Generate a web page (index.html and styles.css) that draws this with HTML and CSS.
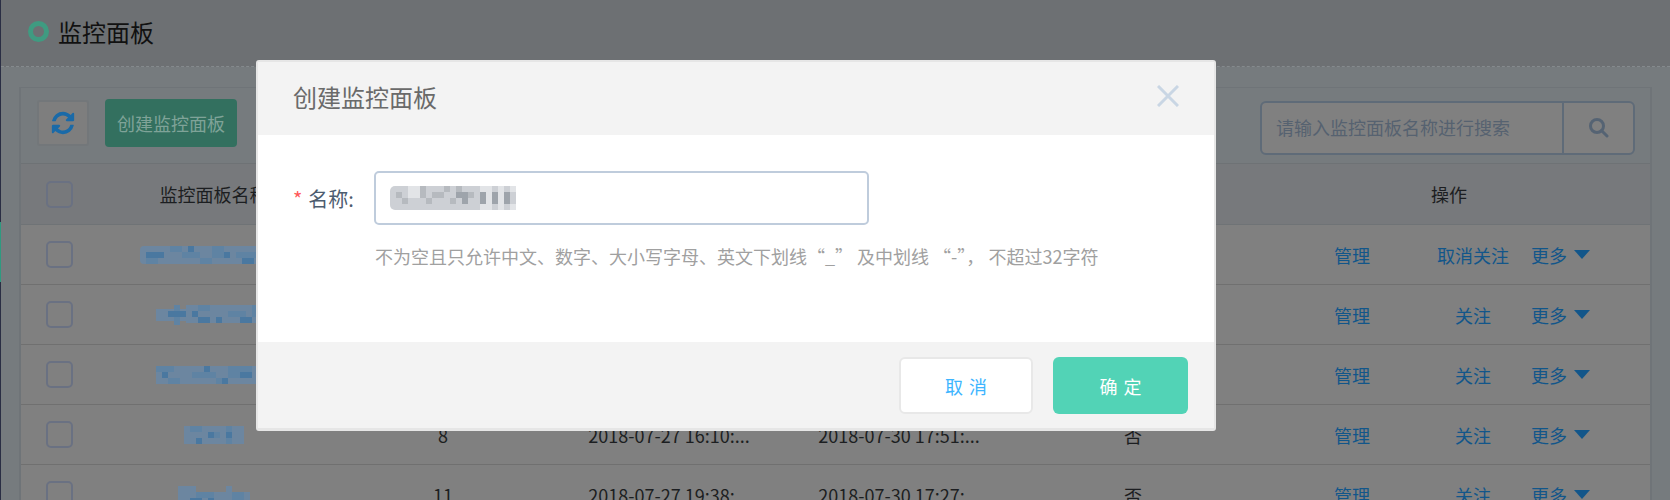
FILE: index.html
```html
<!DOCTYPE html>
<html lang="zh">
<head>
	<meta charset="utf-8">
	<title>监控面板</title>
	<link rel="stylesheet" href="styles.css">
</head>
<body>
<div class="app">
	<div class="nav-strip"><div class="nav-active"></div></div>

	<div class="main">
		<div class="page-head">
			<span class="title-ring"></span>
			<h1 class="page-title">监控面板</h1>
		</div>

		<div class="panel">
			<div class="toolbar">
				<button class="btn-refresh">
					<svg class="icon-refresh" viewBox="0 0 1792 1792"><path d="M1639 1056q0 5-1 7-64 268-268 434.5t-478 166.5q-146 0-282.5-55t-243.5-157l-129 129q-19 19-45 19t-45-19-19-45v-448q0-26 19-45t45-19h448q26 0 45 19t19 45-19 45l-137 137q71 66 161 102t187 36q134 0 250-65t186-179q11-17 53-117 8-23 30-23h192q13 0 22.5 9.5t9.5 22.5zm25-800v448q0 26-19 45t-45 19h-448q-26 0-45-19t-19-45 19-45l138-138q-148-137-349-137-134 0-250 65t-186 179q-11 17-53 117-8 23-30 23h-199q-13 0-22.5-9.5t-9.5-22.5v-7q65-268 270-434.5t480-166.5q146 0 284 55.5t245 156.5l130-129q19-19 45-19t45 19 19 45z"/></svg>
				</button>
				<button class="btn-create">创建监控面板</button>
				<div class="search">
					<span class="search-text">请输入监控面板名称进行搜索</span>
					<span class="search-btn">
						<svg width="22" height="20" viewBox="0 0 22 20"><circle cx="9" cy="8" r="6.5"/><path d="M13.5 12.5 L19 18"/></svg>
					</span>
				</div>
			</div>

			<div class="row row-head">
				<div class="cell-check"><span class="checkbox"></span></div>
				<div>监控面板名称</div>
				<div></div><div></div><div></div><div></div>
				<div>操作</div>
			</div>

			<div class="row">
				<div class="cell-check"><span class="checkbox"></span></div>
				<div>
					<svg class="mosaic" width="148" height="18" viewBox="0 0 148 18">
						<rect class="m-base" y="0" width="148" height="18" rx="4"/>
						<path class="m-mid" d="M30 0h12v6h-12zM42 6h18v6h-18zM72 0h12v12h-12zM96 6h24v6h-24zM126 0h6v18h-6zM6 12h12v6h-12zM60 12h12v6h-12z"/>
						<path class="m-dark" d="M6 6h18v6h-18zM48 0h6v6h-6zM84 6h6v6h-6zM102 12h12v6h-12z"/>
					</svg>
				</div>
				<div></div><div></div><div></div><div></div>
				<div class="actions">
					<a class="act-manage">管理</a>
					<a class="act-follow">取消关注</a>
					<a class="act-more">更多<i class="caret"></i></a>
				</div>
			</div>

			<div class="row">
				<div class="cell-check"><span class="checkbox"></span></div>
				<div>
					<svg class="mosaic" width="116" height="20" viewBox="0 0 116 20">
						<rect class="m-base" y="4" width="116" height="12"/>
						<rect class="m-base" x="30" y="0" width="86" height="18"/>
						<path class="m-mid" d="M42 0h12v6h-12zM72 6h18v6h-18zM96 0h12v12h-12zM18 0h6v20h-6z"/>
						<path class="m-dark" d="M12 6h18v6h-18zM36 6h6v6h-6zM42 12h12v6h-12zM60 12h6v6h-6zM84 12h12v6h-12z"/>
					</svg>
				</div>
				<div></div><div></div><div></div><div></div>
				<div class="actions">
					<a class="act-manage">管理</a>
					<a class="act-follow">关注</a>
					<a class="act-more">更多<i class="caret"></i></a>
				</div>
			</div>

			<div class="row">
				<div class="cell-check"><span class="checkbox"></span></div>
				<div>
					<svg class="mosaic" width="116" height="18" viewBox="0 0 116 18">
						<rect class="m-base" width="116" height="18"/>
						<path class="m-mid" d="M0 0h18v6h-18zM36 6h24v6h-24zM72 0h24v12h-24zM12 12h12v6h-12zM60 12h12v6h-12z"/>
						<path class="m-dark" d="M6 6h6v6h-6zM48 0h6v6h-6zM84 6h12v6h-12zM102 12h6v6h-6zM66 12h6v6h-6z"/>
					</svg>
				</div>
				<div></div><div></div><div></div><div></div>
				<div class="actions">
					<a class="act-manage">管理</a>
					<a class="act-follow">关注</a>
					<a class="act-more">更多<i class="caret"></i></a>
				</div>
			</div>

			<div class="row">
				<div class="cell-check"><span class="checkbox"></span></div>
				<div>
					<svg class="mosaic" width="60" height="18" viewBox="0 0 60 18">
						<rect class="m-base" width="60" height="18"/>
						<path class="m-mid" d="M6 0h12v6h-12zM24 6h12v6h-12zM42 0h6v18h-6z"/>
						<path class="m-dark" d="M12 12h6v6h-6zM24 6h6v6h-6zM42 6h6v6h-6z"/>
					</svg>
				</div>
				<div>8</div>
				<div>2018-07-27 16:10:...</div>
				<div>2018-07-30 17:51:...</div>
				<div>否</div>
				<div class="actions">
					<a class="act-manage">管理</a>
					<a class="act-follow">关注</a>
					<a class="act-more">更多<i class="caret"></i></a>
				</div>
			</div>

			<div class="row">
				<div class="cell-check"><span class="checkbox"></span></div>
				<div>
					<svg class="mosaic" width="72" height="18" viewBox="0 0 72 18">
						<rect class="m-base" y="6" width="72" height="12"/>
						<rect class="m-base" width="18" height="6"/>
						<rect class="m-base" x="48" width="6" height="6"/>
						<path class="m-mid" d="M18 6h18v6h-18zM54 6h12v12h-12z"/>
						<path class="m-dark" d="M12 12h12v6h-12zM30 12h6v6h-6z"/>
					</svg>
				</div>
				<div>11</div>
				<div>2018-07-27 19:38:...</div>
				<div>2018-07-30 17:27:...</div>
				<div>否</div>
				<div class="actions">
					<a class="act-manage">管理</a>
					<a class="act-follow">关注</a>
					<a class="act-more">更多<i class="caret"></i></a>
				</div>
			</div>
		</div>
	</div>
</div>

<div class="modal">
	<div class="modal-head">
		<h2 class="modal-title">创建监控面板</h2>
		<svg class="modal-close" width="22" height="22" viewBox="0 0 22 22"><path d="M1 1 L21 21 M21 1 L1 21"/></svg>
	</div>
	<div class="modal-body">
		<div class="form-row">
			<label class="form-label"><span class="required">*</span>名称:</label>
			<div class="form-input">
				<svg width="126" height="24" viewBox="0 0 126 24">
					<rect fill="#cdd0d5" width="126" height="24" rx="5"/>
					<path fill="#e2e4e7" d="M18 0h12v12h-12zM90 0h12v6h-12zM108 0h6v6h-6zM96 6h6v12h-6zM108 6h6v12h-6zM90 18h12v6h-12zM108 18h6v6h-6zM120 0h6v6h-6zM120 18h6v6h-6z"/>
					<path fill="#b6babf" d="M30 0h6v6h-6zM54 0h6v6h-6zM66 0h6v6h-6zM6 6h6v6h-6zM30 6h6v6h-6zM42 6h12v6h-12zM78 6h6v6h-6zM12 12h6v6h-6zM36 12h6v6h-6zM60 12h6v6h-6z"/>
					<path fill="#9ea4ab" d="M66 6h12v12h-6v-6h-6zM90 6h6v12h-6zM102 6h6v12h-6zM114 6h6v12h-6z"/>
				</svg>
			</div>
		</div>
		<p class="form-help">不为空且只允许中文、数字、大小写字母、英文下划线“_” 及中划线 “-”， 不超过32字符</p>
	</div>
	<div class="modal-foot">
		<button class="btn-cancel">取消</button>
		<button class="btn-ok">确定</button>
	</div>
</div>
</body>
</html>
```

FILE: styles.css
```css
* {
	box-sizing: border-box;
}
html, body {
	height: 500px;
	overflow: hidden;
}
body {
	margin: 0;
	font-family: "Noto Sans CJK SC", "Liberation Sans", sans-serif;
	font-size: 18px;
	color: #1c1e21;
	background: #767b7e;
	position: relative;
}
button {
	font-family: inherit;
	font-size: 18px;
	padding: 0;
}
.app {
	display: flex;
	height: 500px;
}

/* collapsed side nav, only its edge is left */
.nav-strip {
	width: 1px;
	background: #2a2e44;
	padding-top: 222px;
	flex: none;
}
.nav-active {
	height: 60px;
	background: #2f9a80;
}
.main {
	flex: 1;
	min-width: 0;
}

.page-head {
	display: flex;
	align-items: center;
	height: 67px;
	padding: 0 0 3px 27px;
	background: #6d7073;
	border-bottom: 1px dashed #858a8d;
}
.title-ring {
	width: 21px;
	height: 21px;
	border: 5px solid #3f9b81;
	border-radius: 50%;
}
.page-title {
	margin: 0 0 0 9px;
	font-size: 24px;
	font-weight: normal;
	color: #111;
	line-height: 32px;
}

.panel {
	margin: 20px 18px 0 18px;
	border: 2px solid #6f7478;
	border-bottom: none;
	border-top-width: 1px;
	height: 420px;
	overflow: hidden;
}
.toolbar {
	display: flex;
	align-items: flex-start;
	height: 75px;
	padding: 12px 15px 0 16px;
}
.btn-refresh {
	display: flex;
	align-items: center;
	justify-content: center;
	width: 52px;
	height: 46px;
	background: #7e7e7e;
	border: 2px solid #73777a;
	border-radius: 3px;
}
.icon-refresh {
	width: 26px;
	height: 26px;
	fill: #1a6aa8;
}
.btn-create {
	width: 132px;
	height: 48px;
	margin: -1px 0 0 16px;
	background: #33705f;
	border: none;
	border-radius: 4px;
	color: #7fa398;
}
.search {
	display: flex;
	margin: 1px 0 0 auto;
	width: 375px;
	height: 54px;
	background: #808080;
	border: 2px solid #5f6b78;
	border-radius: 6px;
}
.search-text {
	flex: 1;
	padding-left: 14px;
	line-height: 48px;
	color: #566270;
	white-space: nowrap;
}
.search-btn {
	display: flex;
	align-items: center;
	justify-content: center;
	width: 71px;
	border-left: 2px solid #5f6b78;
}
.search-btn svg {
	fill: none;
	stroke: #556373;
	stroke-width: 3;
	stroke-linecap: round;
}

.row {
	display: grid;
	grid-template-columns: 78px 229px 230px 222px 238px 230px 402px;
	align-items: center;
	height: 60px;
	text-align: center;
	background: #808080;
	border-bottom: 1px solid #707070;
}
.row-head {
	height: 62px;
	background: #77797c;
	border-top: 1px solid #6e7275;
	border-bottom: 1px solid #6f7376;
}
.cell-check {
	display: flex;
	padding-left: 25px;
}
.checkbox {
	width: 27px;
	height: 27px;
	border: 2px solid #6a7182;
	border-radius: 5px;
}
.mosaic {
	display: block;
	margin: 0 auto;
}
.m-base {
	fill: #6c86a0;
}
.m-mid {
	fill: #5f83a3;
}
.m-dark {
	fill: #4a78a0;
}

.actions {
	display: flex;
	align-items: center;
	padding-left: 86px;
	color: #12568a;
}
.act-manage {
	width: 36px;
}
.act-follow {
	width: 72px;
	margin-left: 67px;
	white-space: nowrap;
}
.act-more {
	display: flex;
	align-items: center;
	margin-left: 22px;
}
.caret {
	width: 0;
	height: 0;
	margin: -1px 0 0 7px;
	border-top: 9px solid #12568a;
	border-left: 8.5px solid transparent;
	border-right: 8.5px solid transparent;
}

/* dialog */
.modal {
	position: absolute;
	left: 256px;
	top: 60px;
	display: flex;
	flex-direction: column;
	width: 960px;
	height: 371px;
	background: #f3f3f3;
	border: 2px solid #e6e6e6;
	border-bottom-width: 3px;
	border-radius: 3px;
}
.modal-head {
	display: flex;
	align-items: center;
	justify-content: space-between;
	height: 73px;
	padding: 0 35px 5px 35px;
	background: #f3f3f3;
}
.modal-title {
	margin: 0;
	font-size: 24px;
	font-weight: normal;
	color: #6a6a6a;
}
.modal-close {
	fill: none;
	stroke: #c9d6e4;
	stroke-width: 3;
}
.modal-body {
	height: 207px;
	padding: 36px 0 0 35px;
	background: #fff;
}
.form-row {
	display: flex;
	align-items: center;
}
.form-label {
	width: 81px;
	font-size: 20px;
	color: #4d5d70;
	white-space: nowrap;
}
.required {
	margin-right: 6px;
	color: #ff5a5a;
}
.form-input {
	display: flex;
	align-items: center;
	width: 495px;
	height: 54px;
	padding-left: 14px;
	background: #fff;
	border: 2px solid #bfccdc;
	border-radius: 5px;
}
.form-help {
	margin: 18px 0 0 82px;
	font-size: 18px;
	line-height: 26px;
	color: #a0a0a0;
	white-space: nowrap;
}
.modal-foot {
	display: flex;
	justify-content: flex-end;
	gap: 20px;
	padding: 15px 26px 0 0;
}
.btn-cancel, .btn-ok {
	width: 135px;
	height: 57px;
	letter-spacing: 6px;
	text-indent: 6px;
	border-radius: 6px;
}
.btn-cancel {
	width: 134px;
	background: #fff;
	border: 2px solid #e8e8e8;
	color: #3db5ff;
}
.btn-ok {
	background: #52d3b6;
	border: none;
	color: #fff;
}
```
